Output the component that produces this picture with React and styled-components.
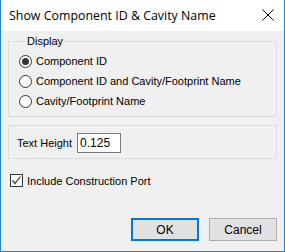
import styled, { createGlobalStyle } from 'styled-components'

const Global = createGlobalStyle`
  html, body { margin: 0; padding: 0; background: #fff; }
  * { box-sizing: border-box; }
`

const Window = styled.div`
  width: 285px;
  height: 252px;
  display: flex;
  flex-direction: column;
  border: 1px solid #1883d7;
  border-top: none;
  background: #f0f0f0;
  font-family: "Liberation Sans", Arial, sans-serif;
  font-size: 11px;
  color: #000;
`

const TitleBar = styled.div`
  height: 31px;
  flex: none;
  background: #fff;
  display: flex;
  align-items: center;
  justify-content: space-between;
  padding: 0 8px 1px 8px;
  font-family: "Open Sans", "Noto Sans", sans-serif;
  font-size: 12.4px;
`

const CloseButton = styled.div`
  width: 14px;
  height: 14px;
  display: flex;
  align-items: center;
  justify-content: center;
  margin-right: 1px;
  margin-top: -1px;
`

const Body = styled.div`
  flex: 1;
  display: flex;
  flex-direction: column;
  padding: 4px 7px 10px 7px;
`

const Group = styled.fieldset`
  margin: 0;
  border: 1px solid #dcdcdc;
  padding: ${p => p.$pad};
  min-width: 0;
  display: flex;
  flex-direction: ${p => p.$row ? 'row' : 'column'};
  align-items: ${p => p.$row ? 'center' : 'stretch'};
  & + & { margin-top: 8px; }
`

const Legend = styled.legend`
  padding: 0 1px;
  margin-left: 7px;
  line-height: 13px;
`

const RadioRow = styled.label`
  height: 20px;
  display: flex;
  align-items: center;
  gap: 4px;
`

const RadioCircle = styled.span`
  width: 13px;
  height: 13px;
  border-radius: 50%;
  border: 1px solid #333;
  background: #fff;
  display: flex;
  align-items: center;
  justify-content: center;
  &::after {
    content: '';
    width: 7px;
    height: 7px;
    border-radius: 50%;
    background: ${p => p.$checked ? '#333' : 'transparent'};
  }
`

const FieldLabel = styled.span`
  margin-right: 5px;
`

const TextBox = styled.div`
  width: 44px;
  height: 20px;
  border: 1px solid #7a7a7a;
  background: #fff;
  padding: 0 2px;
  display: flex;
  align-items: center;
  font-size: 12px;
`

const CheckRow = styled.label`
  display: flex;
  align-items: center;
  gap: 4px;
  margin: 15px 0 0 2px;
`

const CheckBox = styled.span`
  width: 13px;
  height: 13px;
  border: 1px solid #333;
  background: #fff;
  display: flex;
  align-items: center;
  justify-content: center;
`

const Buttons = styled.div`
  margin-top: auto;
  display: flex;
  justify-content: flex-end;
  gap: 10px;
`

const Button = styled.div`
  width: 68px;
  height: 23px;
  display: flex;
  align-items: center;
  justify-content: center;
  background: #e1e1e1;
  border: ${p => p.$default ? '2px solid #0078d7' : '1px solid #adadad'};
  font-size: 12px;
`

export default function App() {
  return (
    <>
      <Global />
      <Window>
        <TitleBar>
          <span>Show Component ID &amp; Cavity Name</span>
          <CloseButton>
            <svg width="12" height="12" viewBox="0 0 12 12">
              <path d="M0.5 0.5 L11.5 11.5 M11.5 0.5 L0.5 11.5" stroke="#000" strokeWidth="1" />
            </svg>
          </CloseButton>
        </TitleBar>
        <Body>
          <Group $pad="3px 0 5px 10px">
            <Legend>Display</Legend>
            <RadioRow><RadioCircle $checked />Component ID</RadioRow>
            <RadioRow><RadioCircle />Component ID and Cavity/Footprint Name</RadioRow>
            <RadioRow><RadioCircle />Cavity/Footprint Name</RadioRow>
          </Group>
          <Group $row $pad="7px 0 5px 8px">
            <FieldLabel>Text Height</FieldLabel>
            <TextBox>0.125</TextBox>
          </Group>
          <CheckRow>
            <CheckBox>
              <svg width="11" height="11" viewBox="0 0 11 11">
                <path d="M1.5 5.5 L4 8.5 L9.5 1.5" fill="none" stroke="#333" strokeWidth="1.2" />
              </svg>
            </CheckBox>
            Include Construction Port
          </CheckRow>
          <Buttons>
            <Button $default>OK</Button>
            <Button>Cancel</Button>
          </Buttons>
        </Body>
      </Window>
    </>
  )
}
